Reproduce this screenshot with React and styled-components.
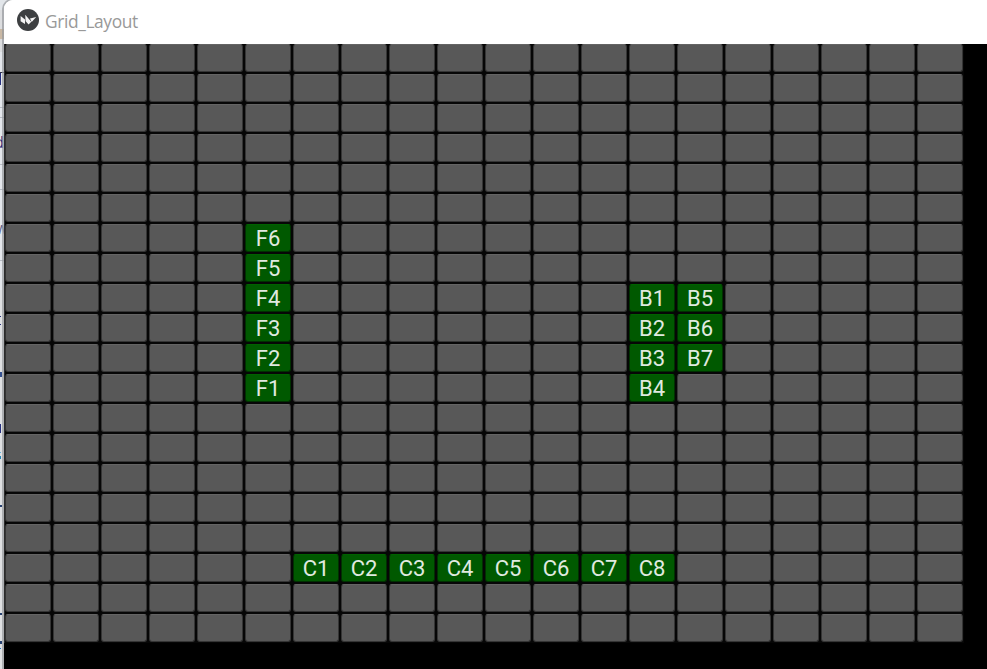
import React from 'react';
import styled, { createGlobalStyle } from 'styled-components';

const GlobalStyle = createGlobalStyle`
  body { margin: 0; overflow: hidden; background: #e2e4e6; }
  * { box-sizing: border-box; }
`;

const Desktop = styled.div`
  display: flex;
  width: 987px;
  height: 669px;
  overflow: hidden;
  background: linear-gradient(#e2e6ea 0 10px, #dcdddf 10px 52px, #e4e7ec 52px 290px, #dfe0e2 290px 100%);
`;

const Behind = styled.aside`
  flex: 0 0 4px;
  display: flex;
  flex-direction: column;
  overflow: hidden;
`;

const Mark = styled.i`
  flex: none;
  margin-top: ${p => p.$gap}px;
  width: ${p => p.$w}px;
  height: ${p => p.$h}px;
  background: ${p => p.$color};
`;

const Glyph = styled.span`
  flex: none;
  display: flex;
  justify-content: flex-end;
  margin-top: ${p => p.$gap}px;
  width: ${p => p.$w}px;
  height: 20px;
  font: 17px/20px "Liberation Sans", sans-serif;
  color: ${p => p.$color};
`;

const Window = styled.main`
  flex: 1;
  display: flex;
  flex-direction: column;
  border-top-left-radius: 9px;
  box-shadow: -1px 0 0 1px rgba(150, 152, 156, 0.7);
  overflow: hidden;
  background: #fff;
`;

const TitleBar = styled.header`
  flex: 0 0 44px;
  display: flex;
  align-items: flex-start;
  gap: 6px;
  padding: 9px 0 0 13px;
  background: #fff;
`;

const Title = styled.h1`
  margin: 0;
  font: 400 17.4px/25px "Open Sans", sans-serif;
  letter-spacing: -0.4px;
  color: #999;
`;

const Canvas = styled.section`
  flex: 1;
  overflow: hidden;
  background: #000;
`;

const Grid = styled.div`
  display: grid;
  grid-template-columns: repeat(20, 48px);
  grid-template-rows: repeat(20, 30px);
  width: 960px;
  margin-top: -1px;
  background: linear-gradient(90deg, #2b2b2b 1px, #060606 1px);
`;

const Cell = styled.button`
  margin: 1px;
  padding: 2px 0 0;
  border: 1px solid ${p => (p.$on ? '#003000' : '#353535')};
  border-top-color: ${p => (p.$on ? '#006200' : '#646464')};
  border-radius: 3px;
  background: ${p => (p.$on ? '#005900' : '#585858')};
  color: #e0eae0;
  font: 400 22px/24px Roboto, sans-serif;
  text-align: center;
  white-space: nowrap;
`;

const labels = {
  '6,5': 'F6', '7,5': 'F5', '8,5': 'F4', '9,5': 'F3', '10,5': 'F2', '11,5': 'F1',
  '8,13': 'B1', '9,13': 'B2', '10,13': 'B3', '11,13': 'B4',
  '8,14': 'B5', '9,14': 'B6', '10,14': 'B7',
  '17,6': 'C1', '17,7': 'C2', '17,8': 'C3', '17,9': 'C4',
  '17,10': 'C5', '17,11': 'C6', '17,12': 'C7', '17,13': 'C8',
};

const cells = Array.from({ length: 400 }, (_, i) => `${Math.floor(i / 20)},${i % 20}`);

const navy = '#26307f';
const rule = '#b9bdc5';

// Edge of the editor window lying behind: [gap above, width, height, colour]
const upperMarks = [
  [29, 4, 10, '#c9b8a4'],
  [33, 4, 1, '#34364a'],
  [0, 1, 12, navy],
  [22, 4, 1, rule],
  [9, 4, 1, rule],
];
const middleMarks = [
  [11, 4, 1, rule],
  [24, 4, 1, rule],
];
const lowerMarks = [
  [21, 4, 1, rule],
  [55, 1, 1, navy],
  [7, 1, 1, navy],
  [47, 2, 5, '#34508f'],
  [47, 1, 9, navy],
  [19, 1, 1, '#67b4dc'],
  [3, 1, 3, '#2685b4'],
  [46, 2, 2, '#26406f'],
  [106, 2, 2, '#26406f'],
  [26, 2, 3, '#26406f'],
  [4, 1, 1, '#2676c4'],
];

const Marks = ({ items }) =>
  items.map(([gap, w, h, color], i) => (
    <Mark key={i} $gap={gap} $w={w} $h={h} $color={color} />
  ));

const KivyLogo = () => (
  <svg width="22" height="22" viewBox="0 0 22 22" aria-hidden="true">
    <circle cx="11" cy="11" r="11" fill="#3d3f41" />
    <path d="M3.6 7 L8 10.6 V15 L3.6 12.2 Z M8.2 5.8 L14.3 12.8 L11.6 15.4 L8.6 12.2 Z M13 9.4 L19.2 8 L14.7 13 Z" fill="#f4f4f4" />
  </svg>
);

export default function App() {
  return (
    <Desktop>
      <GlobalStyle />
      <Behind>
        <Marks items={upperMarks} />
        <Glyph $gap={15} $w={4} $color={navy}>d</Glyph>
        <Marks items={middleMarks} />
        <Glyph $gap={29} $w={8} $color="#5f6690">w</Glyph>
        <Marks items={lowerMarks} />
      </Behind>
      <Window>
        <TitleBar>
          <KivyLogo />
          <Title>Grid_Layout</Title>
        </TitleBar>
        <Canvas>
          <Grid>
            {cells.map(key => (
              <Cell key={key} $on={key in labels}>{labels[key]}</Cell>
            ))}
          </Grid>
        </Canvas>
      </Window>
    </Desktop>
  );
}
